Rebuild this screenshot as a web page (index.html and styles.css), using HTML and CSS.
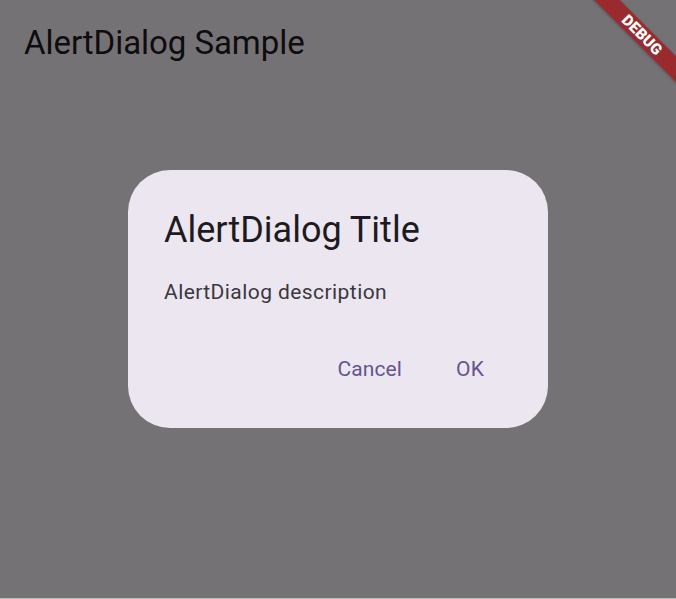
FILE: index.html
```html
<!DOCTYPE html>
<html>
<head>
<meta charset="utf-8">
<link rel="stylesheet" href="styles.css">
</head>
<body>
<div class="screen">
  <header class="appbar"><h1 class="appbar-title">AlertDialog Sample</h1></header>
  <div class="overlay">
    <div class="dialog" role="dialog">
      <h2 class="dialog-title">AlertDialog Title</h2>
      <p class="dialog-desc">AlertDialog description</p>
      <div class="actions">
        <button class="btn">Cancel</button>
        <button class="btn">OK</button>
      </div>
    </div>
  </div>
  <div class="banner"><span>DEBUG</span></div>
</div>
<div class="bottom-line"></div>
</body>
</html>
```
FILE: styles.css
```css
html, body {
  margin: 0;
  padding: 0;
}
body {
  width: 676px;
  height: 599px;
  overflow: hidden;
  background: #757275;
  font-family: Roboto, "Noto Sans", sans-serif;
}
.screen {
  position: relative;
  height: 598px;
  overflow: hidden;
  background: #757275;
}
.bottom-line {
  height: 1px;
  background: #bdbcbd;
}
.appbar {
  padding: 22.7px 0 0 24px;
}
.appbar-title {
  margin: 0;
  font-size: 33px;
  font-weight: 400;
  line-height: 39px;
  letter-spacing: -0.05px;
  color: #0d0c0f;
}
.overlay {
  position: absolute;
  inset: 0;
  display: flex;
  align-items: center;
  justify-content: center;
}
.dialog {
  width: 420px;
  height: 258px;
  box-sizing: border-box;
  background: #ece6f0;
  border-radius: 42px;
  padding: 35.7px 30px 0 36px;
  display: flex;
  flex-direction: column;
}
.dialog-title {
  margin: 0;
  font-size: 36px;
  font-weight: 400;
  line-height: 48px;
  color: #1d1b20;
}
.dialog-desc {
  margin: 23.1px 0 0;
  font-size: 21px;
  line-height: 30px;
  letter-spacing: 0.43px;
  color: #3a3740;
}
.actions {
  margin-top: 32px;
  display: flex;
  justify-content: flex-end;
  gap: 2px;
}
.btn {
  height: 60px;
  min-width: 96px;
  padding: 0 18px;
  border: 0;
  border-radius: 30px;
  background: transparent;
  font-family: Roboto, "Noto Sans", sans-serif;
  font-size: 21px;
  font-weight: 400;
  letter-spacing: 0.1px;
  line-height: 30px;
  color: #65558f;
}
.banner {
  position: absolute;
  left: 562px;
  top: 26px;
  width: 160px;
  height: 18px;
  transform: rotate(45deg);
  background: rgba(165, 20, 24, 0.75);
  display: flex;
  align-items: center;
  justify-content: center;
  box-shadow: 0 1px 3px rgba(0,0,0,0.25);
}
.banner span {
  color: #ffffff;
  font-size: 15.3px;
  font-weight: 900;
  line-height: 18px;
  letter-spacing: 0.2px;
}
```
